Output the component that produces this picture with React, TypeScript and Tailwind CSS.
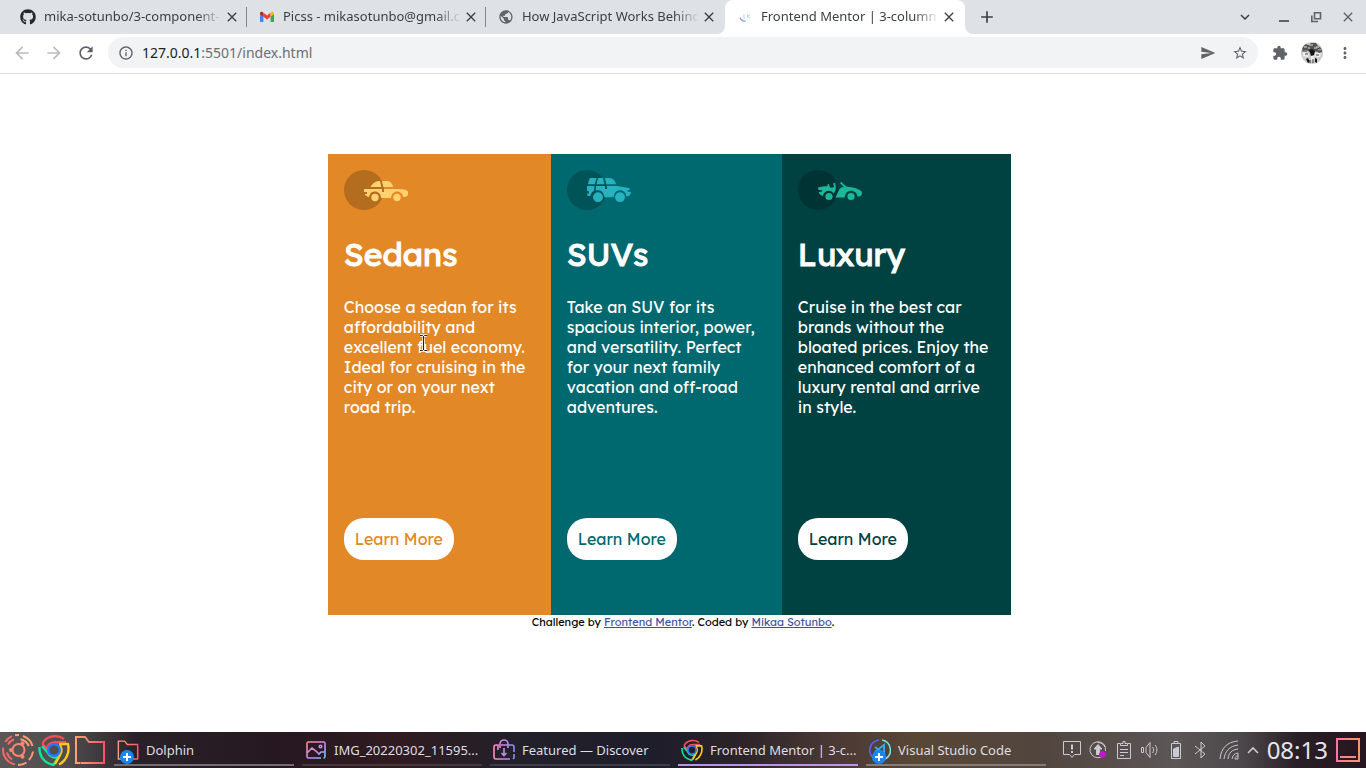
import type { ReactNode } from "react";
import { FaGithub } from "react-icons/fa";
import {
  MdAdd,
  MdArrowBack,
  MdArrowForward,
  MdClose,
  MdExpandMore,
  MdExtension,
  MdInfoOutline,
  MdMoreVert,
  MdPublic,
  MdRefresh,
  MdSend,
  MdStarBorder,
} from "react-icons/md";

function GmailIcon() {
  return (
    <svg viewBox="0 0 16 16" className="size-4">
      <path d="M1 4v8.2c0 .5.4.9.9.9h2.500V7.200L1 4.600z" fill="#4285f4" />
      <path d="M15 4v8.200c0 .5-.4.9-.9.9h-2.500V7.200L15 4.600z" fill="#34a853" />
      <path d="M4.400 3.700 8 6.400l3.600-2.700v4L8 10.400 4.400 7.700z" fill="#ea4335" />
      <path d="M1 4.300C1 2.900 2.600 2.300 3.600 3l.8.700v4L1 5.200z" fill="#c5221f" />
      <path d="M15 4.300C15 2.900 13.400 2.300 12.400 3l-.8.700v4L15 5.200z" fill="#fbbc04" />
    </svg>
  );
}

function MentorIcon() {
  return (
    <svg viewBox="0 0 16 16" className="size-4" fill="none">
      <path d="M3 8.500c.8 2.600 2.800 3.800 5.600 3.600" stroke="#8b9ed8" strokeWidth="1.300" />
      <path d="M7 5v5M10.500 5.500v3M11 7l2-1.500M11 7.500l2 1.500" stroke="#a9dcdc" strokeWidth="1" />
    </svg>
  );
}

const tabs = [
  { title: "mika-sotunbo/3-component-", icon: <FaGithub className="size-4 text-[#24292f]" /> },
  { title: "Picss - mikasotunbo@gmail.c", icon: <GmailIcon /> },
  { title: "How JavaScript Works Behind", icon: <MdPublic className="size-4 text-[#5f6368]" /> },
  { title: "Frontend Mentor | 3-column", icon: <MentorIcon />, active: true },
];

function TabStrip() {
  return (
    <div className="flex h-[34px] bg-[#dee1e6] pl-2 text-[#3c4043]">
      {tabs.map((t, i) => (
        <div key={t.title} className={i >= 2 ? "bg-[linear-gradient(#dee1e6_50%,white_50%)]" : ""}>
          <div
            className={
              t.active
                ? "flex h-full w-60 items-center rounded-t-lg bg-white pr-2 pl-3"
                : i === 2
                  ? "flex h-full w-[239px] items-center rounded-br-lg bg-[#dee1e6] pr-2 pl-3"
                  : "flex h-full w-[239px] items-center pl-3"
            }
          >
            {t.icon}
            <span className="ml-2 w-[178px] overflow-hidden text-[13px] whitespace-nowrap [mask-image:linear-gradient(to_right,black_86%,transparent)]">
              {t.title}
            </span>
            <button aria-label="Close tab" className="ml-0.5">
              <MdClose className="size-4" />
            </button>
            {i < 2 && <span className="ml-auto h-5 w-px bg-[#80868b]" />}
          </div>
        </div>
      ))}
      <div className="flex-1 bg-white">
        <div className="flex h-full items-center rounded-bl-lg bg-[#dee1e6] pl-3">
          <button aria-label="New tab">
            <MdAdd className="size-5" />
          </button>
          <div className="ml-auto flex items-center pr-2.5 text-[#5f6368]">
            <button aria-label="Search tabs" className="mr-[22px]">
              <MdExpandMore className="size-[18px] text-[#3c4043]" />
            </button>
            <button aria-label="Minimize" className="mr-4">
              <svg viewBox="0 0 16 16" className="size-4">
                <path d="M3 12h10" stroke="currentColor" strokeWidth="2" />
              </svg>
            </button>
            <button aria-label="Restore" className="mr-4">
              <svg viewBox="0 0 16 16" className="size-4" fill="none" stroke="currentColor" strokeWidth="1.600">
                <path d="M6.500 3.800h6v6h-6zM3.800 6.500v6H10" />
              </svg>
            </button>
            <button aria-label="Close window">
              <MdClose className="size-4" />
            </button>
          </div>
        </div>
      </div>
    </div>
  );
}

function Avatar() {
  return (
    <svg viewBox="0 0 22 22" className="size-[22px] rounded-full">
      <rect width="22" height="22" fill="#cdcdcd" />
      <path d="M1 6l3-4 4 1 2-2h5l2 3 3 2 1 4-3 1-2-2-3 1-2-1-2 1-4-2-3 1z" fill="#555" />
      <path d="M8 8l3-1 3 2-1 4-3 1-1-3zM5 17l2-1 2 4-2 1zM14 16l2 1v4l-2-1z" fill="#151515" />
      <path d="M2 10l6 2-1 3-5-1zM14 11l6 0-1 4-5 0zM10 14h3l0 4h-3z" fill="#eee" />
      <path d="M3 5h3M8 3h4M15 5h3M17 8h3M2 15h3M7 6h2M13 6h3" stroke="#ddd" />
      <path d="M1 9h5M15 9h6M4 12h3M15 13h3M9 18v3M12 17v4" stroke="#444" />
    </svg>
  );
}

function Toolbar() {
  return (
    <div className="flex h-10 items-center border-b border-[#dadce0] bg-white pr-3 pb-0.5 pl-3 text-[#5f6368]">
      <button aria-label="Back" className="text-[#babcbe]">
        <MdArrowBack className="size-5" />
      </button>
      <button aria-label="Forward" className="ml-3 text-[#babcbe]">
        <MdArrowForward className="size-5" />
      </button>
      <button aria-label="Reload" className="ml-3">
        <MdRefresh className="size-5" />
      </button>
      <div className="ml-3 flex h-[31px] flex-1 items-center rounded-full bg-[#f1f3f4] px-2.5">
        <MdInfoOutline className="size-4" />
        <a href="#address" className="ml-2 text-sm text-[#6b6f73]">
          <span className="text-[#202124]">127.0.0.1</span>:5501/index.html
        </a>
        <button aria-label="Share" className="ml-auto">
          <MdSend className="size-4" />
        </button>
        <button aria-label="Bookmark" className="ml-4">
          <MdStarBorder className="size-4" />
        </button>
      </div>
      <button aria-label="Extensions" className="ml-3.5">
        <MdExtension className="size-4" />
      </button>
      <button aria-label="Profile" className="ml-[13px]">
        <Avatar />
      </button>
      <button aria-label="Menu" className="ml-[13px]">
        <MdMoreVert className="size-[18px]" />
      </button>
    </div>
  );
}

function SedanIcon() {
  return (
    <svg viewBox="0 0 64 40" className="h-10 w-16">
      <circle cx="20" cy="20" r="20" fill="#000" opacity=".2" />
      <g fill="#ffd26f">
        <path d="M26.300 17c2.200-3 4.500-5.600 8.200-6H36l1.300 6zM38 11h6c2.800.3 4.300 2.900 5.200 6h-9.900z" />
        <path d="M20 19h18v3h2v-3h15c4.500.3 9 1 9 3v2.500c-.3 1.700-1.800 2.500-4.900 2.500C58.500 23.500 56 21.600 53 21.600s-5.600 2.300-6 6.400H37.200c-.5-4-3-6.400-6.200-6.400s-5.300 1.800-6 5.300c-2.500-.3-4-1.700-4-2.900h2v-2h-3z" />
        <circle cx="31" cy="27.500" r="3.700" />
        <circle cx="53" cy="27.500" r="3.700" />
      </g>
    </svg>
  );
}

function SuvIcon() {
  return (
    <svg viewBox="0 0 64 40" className="h-10 w-16">
      <circle cx="20" cy="20" r="20" fill="#000" opacity=".2" />
      <g fill="#26b3bf">
        <path d="M23 8h6.500l-1.700 6.200H21c.4-2.400.8-4.300 2-6.200zM31 8h5l1.400 6.200h-7.900zM38 8h4c4 .2 6.200 2.700 7 6.200h-9.700z" />
        <path d="M20 16h7.500l-.5 4.700c-1.800.9-3.200 2.500-3.700 5.300h-2.600L20 23.500h2v-2l-2-1zM29.200 16H38v3h2v-3h10l12 2 1 1.500-2.500 1 .2 1.200H64c-.3 2.700-.8 4.300-4.500 4.800-.6-3.900-3-6.200-6.500-6.200-3.700 0-6.100 2.800-6.400 7H37.400c-.4-4.200-2.800-7-6.400-7l-2.400.2z" />
        <circle cx="31" cy="27.200" r="4.900" />
        <circle cx="53" cy="27.200" r="4.900" />
      </g>
    </svg>
  );
}

function LuxuryIcon() {
  return (
    <svg viewBox="0 0 64 40" className="h-10 w-16">
      <circle cx="20" cy="20" r="20" fill="#000" opacity=".2" />
      <g fill="#1bb89b">
        <path d="M20 17.500c3-.7 6-1.200 9.500-1.200l.2-2.300 1.300.2.800 3c1 .8 2.700.7 4.200-.2l-.8-3.800 1.800-.4c1.400 4.600 1.100 8.300-1.400 10.600-1.200-1.700-2.800-2.600-4.700-2.600-3.300 0-5.300 2-6 5.200C22.200 25 21 23.700 20.700 22l3.400-.5v-1.200l-3.600-.2z" />
        <path d="m42 13.200 1.600-1.500c1.400 2.400 3.600 3.800 5.400 5.100 5.800.2 11.200 1.800 14.500 4.500.8 2 .5 4-1.500 4.900l-2.500.2c-.5-3.400-3-5.600-6.300-5.600-3.700 0-6 2.600-6.400 6.700H37.500l3.800-8c.8-1.500 2-2.300 4.700-2.400z" />
        <circle cx="31" cy="26.500" r="3.600" />
        <circle cx="53" cy="26.500" r="3.600" />
      </g>
    </svg>
  );
}

const cards = [
  {
    name: "Sedans",
    icon: <SedanIcon />,
    card: "bg-[#e28826]",
    button: "text-[#e28826]",
    text: "Choose a sedan for its\naffordability and\nexcellent fuel economy.\nIdeal for cruising in the\ncity or on your next\nroad trip.",
  },
  {
    name: "SUVs",
    icon: <SuvIcon />,
    card: "bg-[#00696f]",
    button: "text-[#00696f]",
    text: "Take an SUV for its\nspacious interior, power,\nand versatility. Perfect\nfor your next family\nvacation and off-road\nadventures.",
  },
  {
    name: "Luxury",
    icon: <LuxuryIcon />,
    card: "bg-[#004241]",
    button: "text-[#004241]",
    text: "Cruise in the best car\nbrands without the\nbloated prices. Enjoy the\nenhanced comfort of a\nluxury rental and arrive\nin style.",
  },
];

function TextCursor() {
  return (
    <svg viewBox="0 0 9 18" className="absolute top-[37px] left-[75px] h-[18px] w-[9px]" fill="none">
      <path d="M1 1.500h2.500l1 1 1-1H8M4.500 2v14M1 16.500h2.500l1-1 1 1H8" stroke="#fff" strokeWidth="2.500" />
      <path d="M1 1.500h2.500l1 1 1-1H8M4.500 2v14M1 16.500h2.500l1-1 1 1H8" stroke="#222" strokeWidth="1" />
    </svg>
  );
}

function Page() {
  return (
    <main className="flex-1 bg-white pt-20 font-['Lexend_Deca',Inter,sans-serif]">
      <div className="ml-[24%] grid w-1/2 grid-cols-[223fr_231fr_229fr]">
        {cards.map((c, i) => (
          <section key={c.name} className={`px-4 pt-4 pb-[55px] text-white ${c.card}`}>
            {c.icon}
            <h2 className="mt-6 text-[32px] leading-10 font-normal [-webkit-text-stroke:1px_white]">{c.name}</h2>
            <div className="relative mt-[23px]">
              <p className="text-base leading-5 whitespace-pre-line">{c.text}</p>
              {i === 0 && <TextCursor />}
            </div>
            <button className={`mt-[101px] h-[42px] w-[110px] rounded-[20px] bg-white text-base ${c.button}`}>
              Learn More
            </button>
          </section>
        ))}
      </div>
      <footer className="text-center text-[11px] leading-[14px] text-black">
        Challenge by{" "}
        <a href="#mentor" className="text-[#3e52a3] underline">
          Frontend Mentor
        </a>
        . Coded by{" "}
        <a href="#author" className="text-[#3e52a3] underline">
          Mikaa Sotunbo
        </a>
        .
      </footer>
    </main>
  );
}

function UbuntuIcon() {
  return (
    <svg viewBox="0 0 32 32" className="size-8" fill="none" strokeWidth="2">
      <path d="M10 2.200A15 15 0 0 0 3.200 8M1.200 13.500A15 15 0 0 0 13 30.500" stroke="#f2696a" />
      <path d="M13 1.300A15 15 0 0 1 17 1M18.500 5.200A11.500 11.500 0 0 1 26.800 12M21 2A15 15 0 0 1 30.500 12" stroke="#ff9c73" />
      <path d="M31 17.500A15 15 0 0 1 27 26M24.500 28.500A15 15 0 0 1 16 31" stroke="#ff9c73" />
      <path d="M12 5.200A11.500 11.500 0 0 0 6 10.500M5 18.500A11.500 11.500 0 0 0 10 25.500" stroke="#f2696a" />
      <circle cx="16.500" cy="16" r="6" stroke="#ff8570" />
      <g fill="#ff8570">
        <circle cx="9" cy="16" r="2" />
        <circle cx="20.500" cy="9.300" r="2" />
        <circle cx="20.500" cy="22.700" r="2" />
      </g>
    </svg>
  );
}

function ChromeIcon({ size }: { size: string }) {
  return (
    <svg viewBox="0 0 32 32" className={size} fill="none" strokeWidth="2.400" strokeLinejoin="round">
      <path d="M4.500 9.500C9 1 20 .5 26 5M4.500 9.500l4.700 6.300C9 10 14 8 18 8.200h10" stroke="#ff4b55" />
      <path d="M1.500 13C1 22 6 29 15.500 31l5-8.500C16 25 11.500 22.500 10 19L4 12" stroke="#13e5a0" />
      <path d="M21 10h9c2 9-2 17-9 20.500M22 11c3 5 1.500 8-.5 11L17 30" stroke="#ffca12" />
      <circle cx="16" cy="16" r="5.800" stroke="#2b75f6" />
    </svg>
  );
}

function FolderIcon({ size }: { size: string }) {
  return (
    <svg viewBox="0 0 32 32" className={size} fill="none" strokeWidth="2">
      <defs>
        <linearGradient id="folder" x1="0" x2="1">
          <stop stopColor="#ffa078" />
          <stop offset="1" stopColor="#ff5468" />
        </linearGradient>
      </defs>
      <path d="M6.500 29H2V3h9l4 5h15v21H7" stroke="url(#folder)" />
      <path d="M30 11v18" stroke="#ff5468" />
    </svg>
  );
}

function Plus() {
  return (
    <svg viewBox="0 0 14 14" className="absolute top-[15px] left-[3px] size-3.5">
      <circle cx="7" cy="7" r="7" fill="#1d85f3" />
      <path d="M7 3v8M3 7h8" stroke="#fff" strokeWidth="2" />
    </svg>
  );
}

function ImageIcon() {
  return (
    <svg viewBox="0 0 22 22" className="size-[22px]" fill="none" strokeWidth="1.600">
      <defs>
        <linearGradient id="image" x1="0" y1="0" x2="1" y2="1">
          <stop stopColor="#ff8696" />
          <stop offset=".6" stopColor="#c78bf5" />
          <stop offset="1" stopColor="#58d1f3" />
        </linearGradient>
      </defs>
      <path d="M16 19H3.500A1.500 1.500 0 0 1 2 17.500v-13A1.500 1.500 0 0 1 3.500 3h15A1.500 1.500 0 0 1 20 4.500v13a1.500 1.500 0 0 1-1.500 1.500M2 14l5-5 4 3 3 3 2-2h4" stroke="url(#image)" />
      <circle cx="15.500" cy="7.500" r="1.300" stroke="#c78bf5" />
    </svg>
  );
}

function DiscoverIcon() {
  return (
    <svg viewBox="0 0 22 22" className="size-[22px]" fill="none" strokeWidth="1.600">
      <defs>
        <linearGradient id="discover">
          <stop stopColor="#ff86c8" />
          <stop offset="1" stopColor="#8c8bff" />
        </linearGradient>
      </defs>
      <path d="M17 20H3a2 2 0 0 1-2-2V8a2 2 0 0 1 2-2h2v5M21 15v4l-1 1M21 13V8a2 2 0 0 0-2-2H8M7 9V5a4 4 0 0 1 8 0v4M11 9v7M8.500 14l2.500 2.500 2.500-2.500" stroke="url(#discover)" />
    </svg>
  );
}

function CodeIcon() {
  return (
    <svg viewBox="0 0 22 22" className="size-[22px]" fill="none">
      <path d="M6 20A10.200 10.200 0 0 1 10 1" stroke="#5864ff" strokeWidth="1.600" />
      <path d="M13 1a10.200 10.200 0 0 1 3 19" stroke="#6fe0e6" strokeWidth="1.600" />
      <path d="M6 8l9 7V6l-9 7" stroke="#2da8ec" strokeWidth="2.200" />
    </svg>
  );
}

const tasks: { label: string; icon: ReactNode; plus?: boolean; line: string }[] = [
  { label: "Dolphin", icon: <FolderIcon size="size-[22px]" />, plus: true, line: "border-[#716d70]" },
  { label: "IMG_20220302_11595...", icon: <ImageIcon />, line: "border-[#44373d]" },
  { label: "Featured — Discover", icon: <DiscoverIcon />, line: "border-[#403d48]" },
  { label: "Frontend Mentor | 3-c...", icon: <ChromeIcon size="size-[22px]" />, line: "border-[#b993f2]" },
  { label: "Visual Studio Code", icon: <CodeIcon />, plus: true, line: "border-[#857c79]" },
];

function Tray() {
  return (
    <div className="ml-auto flex items-center gap-2 pr-1.5 text-[#c9cad3] [&_svg]:fill-none [&_svg]:stroke-current">
      <svg viewBox="0 0 18 18" className="size-[18px]">
        <path d="M.5.500h17v13h-6L9 16.500l-2.500-3h-6z" />
        <path d="M9 3.500v5M9 10v2" strokeWidth="2" />
      </svg>
      <svg viewBox="0 0 18 18" className="size-[18px]">
        <path d="M15 14A8 8 0 1 1 16.500 6M8.500 1.500A7.500 7.500 0 0 1 16.500 10" />
        <path d="M9 3.500 5 8h2.500v5.500h3V8H13z" fill="currentColor" />
        <circle cx="13.500" cy="13.500" r="3" fill="#c217ca" stroke="#c217ca" />
      </svg>
      <svg viewBox="0 0 18 18" className="size-[18px]">
        <path d="M5 2.500H2.500v15h13v-15H13M5.500 4.500v-2H8V.500h2v2h2.500v2zM5 8.500h8M5 11.500h8M5 14.500h4" />
      </svg>
      <svg viewBox="0 0 18 18" className="size-[18px]">
        <path d="M.5 6.500h2v5h-2zM5 6.500l4-5v15l-4-5zM11.500 6c1.500 2 1.500 4 0 6M14 4c2.500 3 2.500 7 0 10" />
      </svg>
      <svg viewBox="0 0 18 18" className="size-[18px]">
        <path d="M4.500 2.500h9v15h-9zM7 2.500v-2h4v2" />
        <path d="M6.500 8 11.500 6v9.500h-5z" fill="currentColor" />
      </svg>
      <svg viewBox="0 0 18 18" className="size-[18px]">
        <path d="m2 5 10 8-4 4V1l4 4-10 8" />
      </svg>
      <svg viewBox="0 0 20 20" className="size-5">
        <path d="M1 19C2 8 8 2 19 1M5 19C6 11 11 6 19 5M9 19c.5-6 4-9.500 10-10M13 19c.5-3.500 2.500-5.500 6-6v6h-3c0-2 1-3 3-3" />
      </svg>
      <svg viewBox="0 0 12 18" className="h-[18px] w-3">
        <path d="m1 12 5-5 5 5" strokeWidth="1.600" />
      </svg>
      <time className="text-2xl text-[#e5e5eb]">08:13</time>
      <button aria-label="Show desktop">
        <svg viewBox="0 0 24 24" className="size-6">
          <defs>
            <linearGradient id="desktop">
              <stop stopColor="#ff74a0" />
              <stop offset="1" stopColor="#ff9469" />
            </linearGradient>
          </defs>
          <path d="M1 1h22v22H1z" stroke="url(#desktop)" strokeWidth="2" />
          <path d="M4 19h16" stroke="#ff8485" strokeWidth="2" />
        </svg>
      </button>
    </div>
  );
}

function Taskbar() {
  return (
    <div className="flex h-9 items-center bg-[linear-gradient(90deg,#5b5756_0%,#504c4d_5%,#292129_10%,#261821_20%,#301b20_29%,#22202a_38%,#1e1d2a_48%,#2b2329_54%,#4b3934_61%,#584735_67%,#51453e_76%,#5c5656_86%,#4c4749_91%,#291e27_95%,#26151f_100%)] pl-0.5">
      <div className="flex items-center gap-1 pr-2">
        <button aria-label="Applications">
          <UbuntuIcon />
        </button>
        <button aria-label="Chrome">
          <ChromeIcon size="size-8" />
        </button>
        <button aria-label="Files">
          <FolderIcon size="size-8" />
        </button>
      </div>
      <div className="flex h-full gap-2 pb-0.5">
        {tasks.map((t) => (
          <button
            key={t.label}
            className={`flex w-[180px] items-center gap-[7px] border-b-2 pl-[3px] text-left text-[13px] whitespace-nowrap text-[#dedee4] ${t.line}`}
          >
            <span className="relative pt-1">
              {t.icon}
              {t.plus && <Plus />}
            </span>
            <span className="pt-1.5">{t.label}</span>
          </button>
        ))}
      </div>
      <Tray />
    </div>
  );
}

export default function App() {
  return (
    <div className="flex min-h-screen flex-col font-['Noto_Sans',sans-serif]">
      <header>
        <TabStrip />
        <Toolbar />
      </header>
      <Page />
      <Taskbar />
    </div>
  );
}
